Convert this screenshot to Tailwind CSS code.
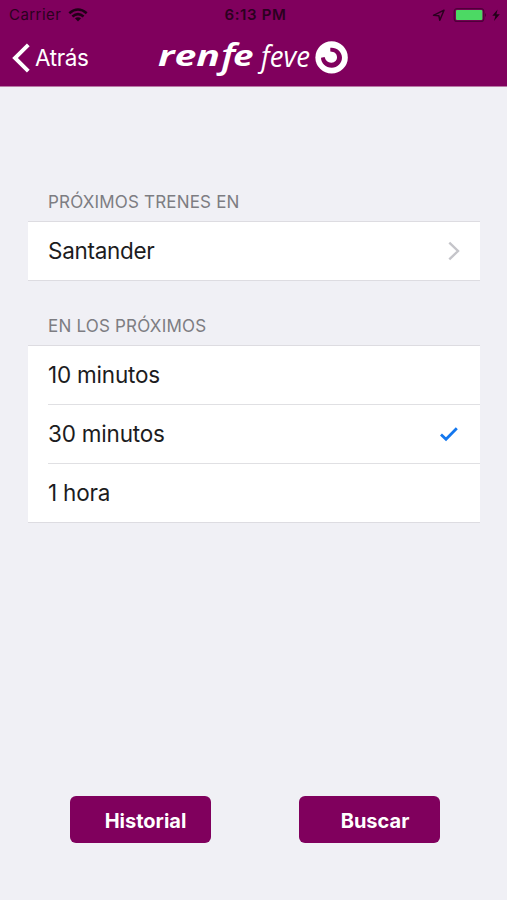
<!DOCTYPE html>
<html lang="es">
<head>
<meta charset="utf-8">
<title>Próximos trenes</title>
<script src="https://cdn.jsdelivr.net/npm/@tailwindcss/browser@4"></script>
</head>
<body class="w-[507px] h-[900px] overflow-hidden bg-[#f0f0f5] font-['Inter',sans-serif] text-[#1c1c1e] flex flex-col">
<header class="h-[87px] shrink-0 bg-[#80005d] border-b border-[#b879a5]">
  <div class="h-[29px] grid grid-cols-3 items-center text-[#2b0020] text-[15px] leading-none">
    <div class="flex items-center gap-[7px] pl-[9px]">
      <span class="tracking-[0.45px]">Carrier</span>
      <svg width="20" height="14" viewBox="0 0 20 14" fill="none" stroke="#210018" stroke-width="2.6"><path d="M1.3 5.2Q10-2.2 18.7 5.2M4.4 8.4Q10 3.8 15.6 8.4"/><path d="M6.9 10.3Q10 8 13.1 10.3L10 13.6Z" fill="#210018" stroke="none"/></svg>
    </div>
    <span class="text-center font-semibold tracking-[0.65px] pl-[4px]">6:13 PM</span>
    <div class="flex items-center justify-end pr-[5px]">
      <svg width="70" height="16" viewBox="0 0 70 16"><path d="M1.5 8.3L12 3.2L7.8 13.3L6.9 8.8Z" fill="none" stroke="#2b0020" stroke-width="1.5" stroke-linejoin="round"/><rect x="22.2" y="1.6" width="29.6" height="12.8" rx="3" fill="none" stroke="#4e0039" stroke-width="1.2"/><rect x="24" y="3" width="26.4" height="10" rx="1" fill="#4cd964"/><path d="M53 6Q55.3 8 53 10Z" fill="#4e0039"/><path d="M65.6 2.4L60.3 8.8H63.4L62 14L67.8 7.2H64.4Z" fill="#210018"/></svg>
    </div>
  </div>
  <div class="h-[58px] flex items-center text-white">
    <button class="flex items-center w-[155px] pl-[12px] gap-[5px] text-[22.5px] leading-none">
      <svg width="18" height="30" viewBox="0 0 18 30" fill="none" stroke="white" stroke-width="3.9"><path d="M16.3 1.9L3 15L16.3 28.1"/></svg>
      <span class="tracking-[-0.4px]">Atrás</span>
    </button>
    <svg class="overflow-visible" width="196" height="58" viewBox="155 29 196 58" fill="white">
      <g font-family="Open Sans" font-style="italic">
        <text x="158" y="66" font-weight="700" font-size="28" textLength="62" lengthAdjust="spacingAndGlyphs">ren</text>
        <text x="221" y="67.5" font-weight="600" font-size="35" textLength="14" lengthAdjust="spacingAndGlyphs">f</text>
        <text x="233" y="66" font-weight="700" font-size="28" textLength="20.5" lengthAdjust="spacingAndGlyphs">e</text>
        <text x="261" y="67" font-size="29" textLength="49" lengthAdjust="spacingAndGlyphs">feve</text>
      </g>
      <circle cx="331.6" cy="57.4" r="16.2"/>
      <path d="M330.3 47.8C336 47 342 51.3 342 57.6C342 63.5 337.3 67.8 331.8 67.8C325.7 67.8 321 63 321 57.8L324.6 57C325.6 61 328.3 62.9 331.5 62.7C335 62.5 337.2 60 337 57C336.8 53.5 334.3 51.8 330.3 51.6Z" fill="#80005d"/>
    </svg>
  </div>
</header>
<main class="flex-1 flex flex-col px-[28px] pt-[105px]">
  <h2 class="pl-[20px] h-[29px] leading-[20px] text-[17px] text-[#7d7d82]"><span class="tracking-[0.18px]">PRÓXIMOS TRENES EN</span></h2>
  <div class="w-[452px] h-[60px] bg-white border-y border-[#dddce1] flex items-center justify-between pl-[20px] pr-[20px] text-[22.5px]">
    <span class="tracking-[-0.3px]">Santander</span>
    <svg width="12" height="20" viewBox="0 0 12 20" fill="none" stroke="#c5c5ca" stroke-width="2.4"><path d="M1.3 1.6L10 10L1.3 18.4"/></svg>
  </div>
  <h2 class="pl-[20px] mt-[35px] h-[29px] leading-[20px] text-[17px] text-[#7d7d82]"><span class="tracking-[0.2px]">EN LOS PRÓXIMOS</span></h2>
  <div class="w-[452px] bg-white border-y border-[#dddce1] pl-[20px] text-[22.5px] tracking-[-0.2px]">
    <div class="h-[59px] border-b border-[#e0e0e3] flex items-center"><span>10 minutos</span></div>
    <div class="h-[59px] border-b border-[#e0e0e3] flex items-center justify-between pr-[21px]"><span>30 minutos</span>
      <svg width="20" height="16" viewBox="0 0 20 16" fill="none" stroke="#1477ee" stroke-width="2.8"><path d="M2 8.4L7 13.2L17.8 2.2"/></svg></div>
    <div class="h-[58px] flex items-center"><span>1 hora</span></div>
  </div>
  <div class="mt-auto mb-[57px] ml-[42px] flex gap-[88px] text-white font-bold text-[20px]">
    <button class="w-[141px] h-[47px] rounded-[6px] bg-[#80005d] pl-[10px] pt-[2px]">Historial</button>
    <button class="w-[141px] h-[47px] rounded-[6px] bg-[#80005d] pl-[11px] pt-[2px]">Buscar</button>
  </div>
</main>
</body>
</html>
